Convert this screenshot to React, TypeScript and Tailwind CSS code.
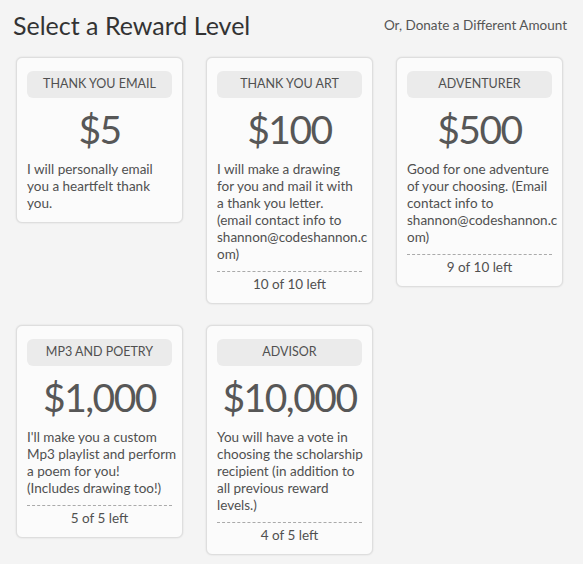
const LEVELS = [
  {
    name: 'Thank You Email',
    price: '$5',
    lines: ['I will personally email', 'you a heartfelt thank', 'you.'],
    left: null,
  },
  {
    name: 'Thank You Art',
    price: '$100',
    lines: [
      'I will make a drawing',
      'for you and mail it with',
      'a thank you letter.',
      '(email contact info to',
      'shannon@codeshannon.c',
      'om)',
    ],
    left: '10 of 10 left',
  },
  {
    name: 'Adventurer',
    price: '$500',
    lines: [
      'Good for one adventure',
      'of your choosing. (Email',
      'contact info to',
      'shannon@codeshannon.c',
      'om)',
    ],
    left: '9 of 10 left',
  },
  {
    name: 'Mp3 and Poetry',
    price: '$1,000',
    lines: [
      "I'll make you a custom",
      'Mp3 playlist and perform',
      'a poem for you!',
      '(Includes drawing too!)',
    ],
    left: '5 of 5 left',
  },
  {
    name: 'Advisor',
    price: '$10,000',
    lines: [
      'You will have a vote in',
      'choosing the scholarship',
      'recipient (in addition to',
      'all previous reward',
      'levels.)',
    ],
    left: '4 of 5 left',
  },
]

type Level = (typeof LEVELS)[number]

function RewardCard({ level }: { level: Level }) {
  return (
    <div className="w-[167px] rounded-[6px] border border-[#dedede] bg-[#fbfbfb] px-[10px] pt-[13px] pb-[10px] shadow-[0_0_2px_rgba(0,0,0,0.12)]">
      <div className="flex h-[27px] items-center justify-center rounded-[6px] bg-[#ebebeb] text-[12.5px] uppercase text-[#505050]">
        {level.name}
      </div>
      <div className="flex h-[63px] items-center justify-center text-[39px] leading-none tracking-[-1.5px] text-[#575757]">
        {level.price}
      </div>
      <p className="text-[13.5px] leading-[17px] text-[#505050]">
        {level.lines.map((line, i) => (
          <span key={i} className="block whitespace-nowrap">
            {line}
          </span>
        ))}
      </p>
      {level.left && (
        <div className="mt-2 border-t border-dashed border-[#aaa] pt-1 text-center text-[13.5px] leading-[17px] text-[#505050]">
          {level.left}
        </div>
      )}
    </div>
  )
}

export default function App() {
  return (
    <div className="min-h-[564px] w-[583px] bg-[#f4f4f4] font-['Lato','Open_Sans',sans-serif]">
      {/* Header */}
      <div className="flex items-center justify-between pt-[10px] pr-[16px] pl-[13px]">
        <h1 className="text-[25px] leading-[30px] text-[#333]">Select a Reward Level</h1>
        <a className="text-[13.5px] text-[#555]">Or, Donate a Different Amount</a>
      </div>

      {/* Reward levels */}
      <div className="mt-[17px] flex flex-wrap items-start gap-x-[23px] gap-y-[21px] pl-[16px]">
        {LEVELS.map((level) => (
          <RewardCard key={level.name} level={level} />
        ))}
      </div>
    </div>
  )
}
